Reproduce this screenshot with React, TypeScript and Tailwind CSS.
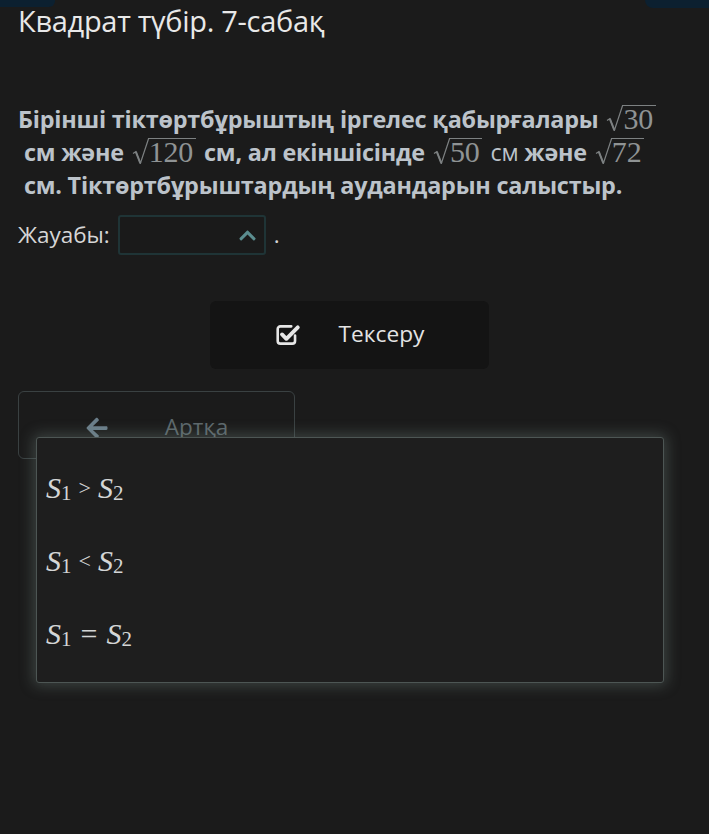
import { FaArrowLeft, FaChevronUp } from "react-icons/fa";

const sans = "font-['Open_Sans','Noto_Sans',sans-serif]";
const serif = "font-['Liberation_Serif','DejaVu_Serif',serif]";

// radical sign drawn like KaTeX's thin slanted root
function Root({ n }: { n: string }) {
  return (
    <span className={`${serif} mx-[2px] inline-flex h-[24px] items-end font-normal text-[#8f9394] text-[30px] align-[-3px]`}>
      <svg width="17" height="26" viewBox="0 0 17 26" fill="none" className="shrink-0">
        <path d="M1 15.5l2.8-1.8 4.6 11.6L16.6 0.5" stroke="#7d8182" strokeWidth="1.2" />
        <path d="M3.8 13.7l4.6 11.6" stroke="#7d8182" strokeWidth="2" />
      </svg>
      <span className="border-t border-[#7d8182] leading-[25px] pl-[1px] pr-[3px] -ml-[1px]">{n}</span>
    </span>
  );
}

function CheckSquare() {
  return (
    <svg width="26" height="24" viewBox="0 0 24 22" fill="none">
      <path
        d="M15 3H5a2.5 2.5 0 0 0-2.5 2.5v11A2.5 2.5 0 0 0 5 19h11a2.5 2.5 0 0 0 2.5-2.5v-5"
        stroke="#e6e6e6"
        strokeWidth="2.4"
        strokeLinecap="round"
      />
      <path d="M6.5 10.5l4 4L21 4" stroke="#e6e6e6" strokeWidth="3.6" strokeLinecap="round" strokeLinejoin="round" />
    </svg>
  );
}

function Option({ op }: { op: string }) {
  return (
    <div className={`${serif} flex h-[73px] items-center text-[30px] text-[#d4d6d6]`}>
      <span className="italic">S</span>
      <span className="text-[21px] mt-3">1</span>
      <span className={op === "=" ? "mx-[9px] text-[30px]" : "mx-[7px] text-[22px]"}>{op}</span>
      <span className="italic">S</span>
      <span className="text-[21px] mt-3">2</span>
    </div>
  );
}

export default function App() {
  return (
    <div className={`${sans} relative min-h-[834px] w-full bg-[#1b1b1b] overflow-hidden`}>
      <div className="absolute left-0 top-0 h-[7px] w-[55px] rounded-br-md bg-[#0c2030]" />
      <div className="absolute right-0 top-0 h-[8px] w-[64px] rounded-bl-lg bg-[#0c2030]" />

      <div className="px-[18px] pt-[1px]">
        <h1 className="text-[29px] leading-[40px] text-[#e8e8e8] tracking-[-0.3px]">Квадрат түбір. 7-сабақ</h1>

        <div className="mt-[62px] text-[23.4px] font-bold leading-[33px] text-[#bcc3ca] tracking-[-0.2px] whitespace-nowrap">
          <div className="h-[33px]">
            Бірінші тіктөртбұрыштың іргелес қабырғалары <Root n="30" />
          </div>
          <div className="h-[33px]">
            &nbsp;см және <Root n="120" /> см, ал екіншісінде <Root n="50" /> <span className="font-normal">см</span> және{" "}
            <Root n="72" />
          </div>
          <div className="h-[33px]">&nbsp;см. Тіктөртбұрыштардың аудандарын салыстыр.</div>
        </div>

        <div className="mt-[13px] flex items-center text-[22.5px] text-[#d6d6d6]">
          <span>Жауабы:</span>
          <div className="ml-[8px] flex h-[40px] w-[148px] items-center justify-end rounded-[3px] border-2 border-[#1f3436] bg-[#1a1a1a] pr-[7px]">
            <FaChevronUp className="text-[#5b8d8f]" size={19} />
          </div>
          <span className="ml-[8px]">.</span>
        </div>

        <div className="mt-[46px] flex justify-center pr-[10px]">
          <button className="flex h-[68px] w-[279px] items-center justify-center gap-[38px] rounded-md bg-[#141414] text-[22.7px] text-[#e4e4e4]">
            <CheckSquare />
            <span className="mb-[2px]">Тексеру</span>
          </button>
        </div>

        <div className="mt-[22px]">
          <button className="flex h-[68px] w-[277px] items-start justify-center gap-[56px] rounded-md border border-[#3a4142] pt-[18px] text-[22.5px] text-[#5d686c]">
            <FaArrowLeft className="mt-[6px] text-[#6b7e8a]" size={24} />
            <span>Артқа</span>
          </button>
        </div>
      </div>

      <div className="absolute left-[36px] top-[437px] h-[246px] w-[628px] rounded-[3px] border border-[#4d5654] bg-[#1e1e1e] px-[9px] pt-[13px] shadow-[0_0_14px_3px_rgba(120,140,135,0.35)]">
        <Option op=">" />
        <Option op="<" />
        <Option op="=" />
      </div>
    </div>
  );
}
